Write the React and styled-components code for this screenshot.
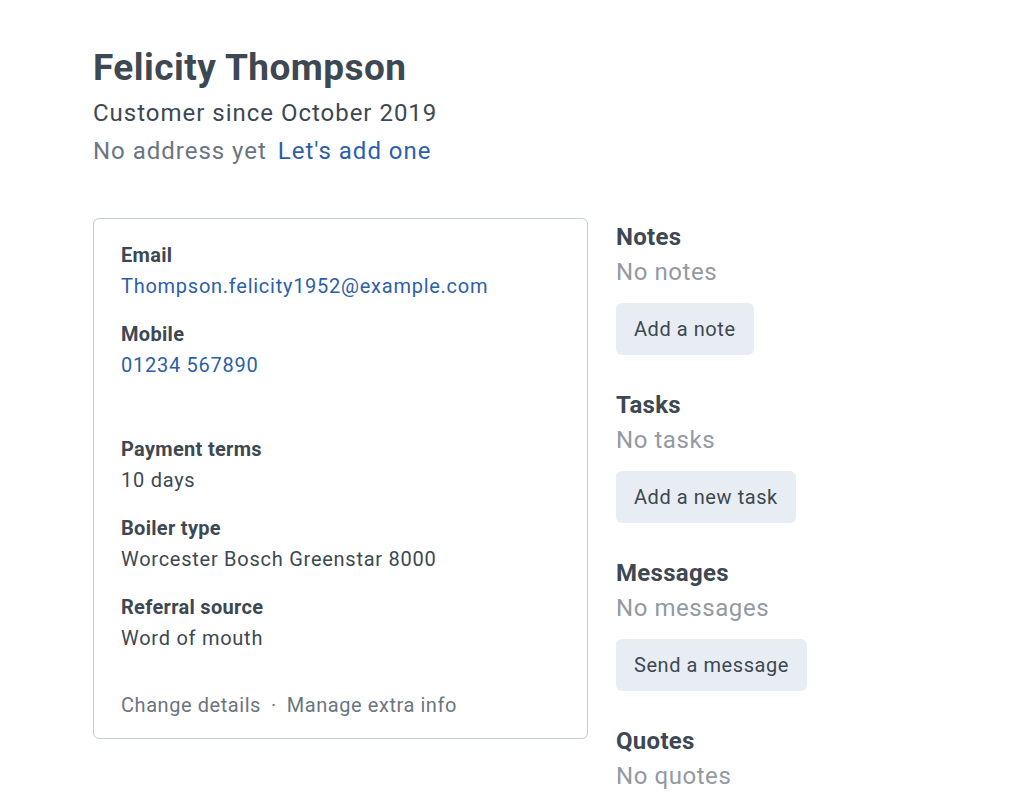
import React from "react";
import styled, { createGlobalStyle } from "styled-components";

const Global = createGlobalStyle`
  body {
    margin: 0;
    background: #ffffff;
    font-family: Roboto, "Liberation Sans", Arial, sans-serif;
    color: #3d4852;
    letter-spacing: 0.035em;
  }
`;

const Page = styled.div`
  padding: 44px 0 0 93px;
`;

const Header = styled.header`
  margin-bottom: 48px;
`;

const Title = styled.h1`
  margin: 0 0 2px;
  font-size: 37px;
  font-weight: 700;
  line-height: 48px;
  letter-spacing: 0.012em;
  color: #3d4852;
`;

const Sub = styled.div`
  font-size: 24px;
  line-height: 38px;
  letter-spacing: 0.041em;
  color: ${(p) => (p.$muted ? "#6b7580" : "#3d4852")};
`;

const Link = styled.a`
  color: #2c5fa8;
  text-decoration: none;
  margin-left: ${(p) => p.$gap || 0}px;
`;

const Columns = styled.div`
  display: flex;
  align-items: flex-start;
  gap: 28px;
`;

const Card = styled.section`
  width: 495px;
  box-sizing: border-box;
  border: 1px solid #c5cbd2;
  border-radius: 6px;
  padding: 21px 27px 17px;
`;

const Field = styled.div`
  margin-bottom: ${(p) => p.$space ?? 17}px;
`;

const Label = styled.div`
  font-size: 20px;
  font-weight: 700;
  line-height: 31px;
  letter-spacing: 0.015em;
  color: #3d4852;
`;

const Value = styled.div`
  font-size: 20px;
  line-height: 31px;
  letter-spacing: 0.037em;
  color: ${(p) => (p.$link ? "#2c5fa8" : "#3d4852")};
`;

const Footer = styled.div`
  margin-top: 36px;
  font-size: 20px;
  line-height: 31px;
  color: #6b7580;
`;

const Dot = styled.span`
  margin: 0 10px;
`;

const Side = styled.aside`
  display: flex;
  flex-direction: column;
  gap: 33px;
  padding-top: 2px;
`;

const Block = styled.div`
  display: flex;
  flex-direction: column;
  align-items: flex-start;
`;

const BlockTitle = styled.h2`
  margin: 0;
  font-size: 24px;
  font-weight: 700;
  line-height: 35px;
  letter-spacing: 0.012em;
  color: #3d4852;
`;

const Empty = styled.div`
  font-size: 24px;
  line-height: 35px;
  color: #9499a2;
`;

const Button = styled.button`
  margin-top: 13px;
  height: 52px;
  padding: 0 18px;
  border: none;
  border-radius: 6px;
  background: #e8edf4;
  font-family: inherit;
  font-size: 20px;
  letter-spacing: inherit;
  color: #3d4852;
`;

const sections = [
  { title: "Notes", empty: "No notes", action: "Add a note" },
  { title: "Tasks", empty: "No tasks", action: "Add a new task" },
  { title: "Messages", empty: "No messages", action: "Send a message" },
  { title: "Quotes", empty: "No quotes" },
];

export default function App() {
  return (
    <Page>
      <Global />
      <Header>
        <Title>Felicity Thompson</Title>
        <Sub>Customer since October 2019</Sub>
        <Sub $muted>
          No address yet<Link $gap={11} href="#">Let's add one</Link>
        </Sub>
      </Header>
      <Columns>
        <Card>
          <Field>
            <Label>Email</Label>
            <Value $link>Thompson.felicity1952@example.com</Value>
          </Field>
          <Field $space={53}>
            <Label>Mobile</Label>
            <Value $link>01234 567890</Value>
          </Field>
          <Field>
            <Label>Payment terms</Label>
            <Value>10 days</Value>
          </Field>
          <Field>
            <Label>Boiler type</Label>
            <Value>Worcester Bosch Greenstar 8000</Value>
          </Field>
          <Field $space={0}>
            <Label>Referral source</Label>
            <Value>Word of mouth</Value>
          </Field>
          <Footer>
            Change details<Dot>·</Dot>Manage extra info
          </Footer>
        </Card>
        <Side>
          {sections.map((s) => (
            <Block key={s.title}>
              <BlockTitle>{s.title}</BlockTitle>
              <Empty>{s.empty}</Empty>
              {s.action && <Button>{s.action}</Button>}
            </Block>
          ))}
        </Side>
      </Columns>
    </Page>
  );
}
